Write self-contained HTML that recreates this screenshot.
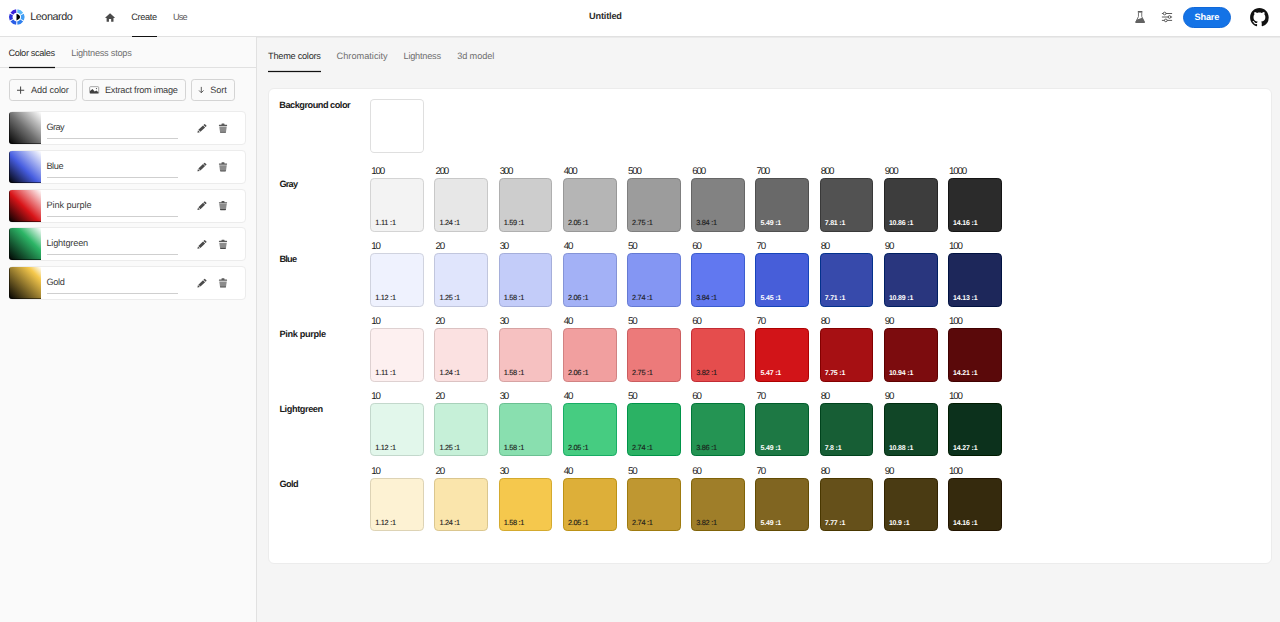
<!DOCTYPE html>
<html lang="en"><head><meta charset="utf-8"><title>Leonardo</title>
<style>
html,body{margin:0;padding:0}
body{width:1280px;height:622px;overflow:hidden;position:relative;background:#f5f5f5;font-family:"Liberation Sans", sans-serif;}
header,nav,aside,main,section,ul,li{display:block;margin:0;padding:0;list-style:none}
.t{position:absolute;white-space:pre;line-height:1;text-rendering:geometricPrecision}
.r{-webkit-text-stroke:0.120px currentColor}
.abs{position:absolute}
#hdr{position:absolute;left:0;top:0;width:1280px;height:36px;background:#fff;border-bottom:1px solid #e1e1e1}
#hdrshade{position:absolute;left:0;top:37px;width:1280px;height:1px;background:rgba(0,0,0,.045)}
#left{position:absolute;left:0;top:37px;width:256px;height:585px;background:#fafafa;border-right:1px solid #e1e1e1}
#ltabline{position:absolute;left:0;top:67px;width:256px;height:1px;background:#e1e1e1}
.sel{position:absolute;height:1px;background:#111}
.sel.soft{background:rgba(17,17,17,.12)}
.sel.mid{background:rgba(17,17,17,.4)}
.btn{position:absolute;top:79px;height:20px;border:1px solid #d4d4d4;border-radius:3.200px;box-sizing:content-box}
.card{position:absolute;left:9px;width:235px;height:32px;background:#fff;border:1px solid #ececec;border-radius:4px;box-sizing:content-box}
.grad{position:absolute;left:-1px;top:0;width:32px;height:32px;border-radius:3px 0 0 3px;box-shadow:inset 1px -1px 0 rgba(0,0,0,.5)}
.ul{position:absolute;left:37px;top:26px;width:131px;height:1px;background:#cfcfcf}
#share{position:absolute;left:1183px;top:7px;width:48px;height:20.500px;border-radius:10.500px;background:#1473e6;box-sizing:border-box;border:1px solid #1068d8}
#panel{position:absolute;left:268px;top:88px;width:1002px;height:474px;background:#fff;border:1px solid #ececec;border-radius:6px}
.sw{position:absolute;width:53.900px;height:53.900px;border-radius:4.200px;box-sizing:border-box;border:1px solid rgba(0,0,0,.18)}
</style></head><body>
<header>
<div id="hdr"></div>
<div id="hdrshade"></div>
<svg class="abs" style="left:7px;top:7px" width="20" height="20" viewBox="0 0 20 20"><g transform="translate(1.50 1.80) scale(0.9432 0.9432)"><g transform="translate(8.8 8.8)"><g fill="none" stroke-width="3.7"><path stroke="#5ab8f8" d="M0.55 -6.38A6.4 6.4 0 0 1 5.25 -3.67"/><path stroke="#419df3" d="M5.80 -2.71A6.4 6.4 0 0 1 5.80 2.71"/><path stroke="#2f80ee" d="M5.25 3.67A6.4 6.4 0 0 1 0.55 6.38"/><path stroke="#2a5de6" d="M-0.55 6.38A6.4 6.4 0 0 1 -5.25 3.67"/><path stroke="#2a33dc" d="M-5.80 2.71A6.4 6.4 0 0 1 -5.80 -2.71"/><path stroke="#3a1fd8" d="M-5.25 -3.67A6.4 6.4 0 0 1 -0.55 -6.38"/></g><path fill="#000" d="M-0.3 -3.5C2.4 -2.7 3.5 -1 3.5 0C3.5 1 2.4 2.7 -0.3 3.5Z"/></g></g></svg>
<span class="t" style="left:30.20px;top:12px;font-size:10.8px;font-weight:400;color:#2c2c2c;letter-spacing:-0.420px">Leonardo</span>
<nav>
<svg class="abs" style="left:104px;top:11px" width="14" height="12" viewBox="0 0 14 12"><g transform="translate(1.00 1.90) scale(0.4591 0.4500)"><path fill="#4b4b4b" d="M11 0.500 0.800 10.200a.5.5 0 0 0 .35.860H3.500V19a.6.6 0 0 0 .6.6H8.600V13.500h4.800V19.600H17.900a.6.6 0 0 0 .6-.6V11.060h2.350a.5.500 0 0 0 .35-.86z"/></g></svg>
<span class="t" style="left:131.30px;top:13px;font-size:9.2px;font-weight:400;color:#2c2c2c;letter-spacing:-0.356px">Create</span>
<div class="sel" style="left:131.600px;top:36px;width:25.600px"></div><div class="sel mid" style="left:131.600px;top:37px;width:25.600px"></div>
<span class="t" style="left:172.90px;top:13px;font-size:9.2px;font-weight:400;color:#5a5a5a;letter-spacing:-0.772px">Use</span>
</nav>
<span class="t" style="left:589.10px;top:12px;font-size:9.2px;font-weight:700;color:#2c2c2c;letter-spacing:-0.186px">Untitled</span>
<svg class="abs" style="left:1134px;top:10px" width="13" height="15" viewBox="0 0 13 15"><g transform="translate(1.10 1.10) scale(0.9091 0.9672)"><path fill="#4b4b4b" d="M3 0h5v1.500H3z"/><path fill="none" stroke="#5a5a5a" stroke-width="0.900" d="M3.700 1.400V5.600L0.800 11.200M7.300 1.400V5.600L10.200 11.200"/><path fill="#626262" d="M2.100 8.700 8 6.900 10.700 11.300a.6.6 0 0 1-.5.900H0.800a.6.6 0 0 1-.5-.9z"/></g></svg>
<svg class="abs" style="left:1160px;top:11px" width="14" height="13" viewBox="0 0 14 13"><g transform="translate(1.90 1.00) scale(1.0000 1.0000)"><g fill="#fff" stroke="#4b4b4b" stroke-width="0.900"><path d="M0 1.500H10.200M0 5H10.200M0 8.400H10.200"/><circle cx="2.700" cy="1.500" r="1.350"/><circle cx="7.600" cy="5" r="1.350"/><circle cx="3.900" cy="8.400" r="1.350"/></g></g></svg>
<div id="share"></div>
<span class="t" style="left:1194.60px;top:13px;font-size:9.2px;font-weight:700;color:#ffffff;letter-spacing:-0.212px">Share</span>
<svg class="abs" style="left:1249px;top:7px" width="22" height="22" viewBox="0 0 22 22"><g transform="translate(1.10 1.10) scale(1.1625 1.1629)"><path fill="#111" d="M8 0C3.580 0 0 3.580 0 8c0 3.540 2.290 6.530 5.470 7.590.4.070.55-.17.55-.38 0-.19-.01-.82-.01-1.490-2.010.37-2.530-.49-2.690-.94-.09-.23-.48-.94-.82-1.130-.28-.15-.68-.52-.01-.53.63-.01 1.080.58 1.230.82.72 1.210 1.870.87 2.330.66.070-.52.28-.87.510-1.070-1.780-.2-3.640-.89-3.640-3.950 0-.87.310-1.590.82-2.150-.08-.2-.36-1.020.08-2.120 0 0 .67-.21 2.200.82.640-.18 1.320-.27 2-.27.680 0 1.360.09 2 .27 1.530-1.040 2.200-.82 2.200-.82.440 1.100.16 1.920.08 2.120.510.56.82 1.270.82 2.150 0 3.070-1.870 3.750-3.650 3.950.29.25.54.73.54 1.480 0 1.070-.01 1.930-.01 2.200 0 .21.150.46.55.38A8.013 8.013 0 0 0 16 8c0-4.420-3.580-8-8-8z"/></g></svg>
</header>
<aside>
<div id="left"></div>
<div id="ltabline"></div>
<nav>
<span class="t" style="left:8.40px;top:49px;font-size:9.2px;font-weight:400;color:#2c2c2c;letter-spacing:-0.351px">Color scales</span>
<div class="sel soft" style="left:8.600px;top:66px;width:46.800px"></div><div class="sel" style="left:8.600px;top:67px;width:46.800px"></div><div class="sel soft" style="left:8.600px;top:68px;width:46.800px"></div>
<span class="t" style="left:71.30px;top:49px;font-size:9.2px;font-weight:400;color:#6e6e6e;letter-spacing:-0.239px">Lightness stops</span>
</nav>
<div class="btn" style="left:9px;width:66px"></div>
<svg class="abs" style="left:16px;top:85px" width="11" height="11" viewBox="0 0 11 11"><g transform="translate(1.00 1.60) scale(0.7200 0.7200)"><path fill="#464646" d="M4.300 0h1.400v4.300H10v1.400H5.700V10H4.300V5.700H0V4.300h4.300z"/></g></svg>
<span class="t" style="left:31.10px;top:86px;font-size:9.2px;font-weight:400;color:#3a3a3a;letter-spacing:-0.129px">Add color</span>
<div class="btn" style="left:82px;width:102px"></div>
<svg class="abs" style="left:88px;top:85px" width="13" height="11" viewBox="0 0 13 11"><g transform="translate(1.30 1.30) scale(1.0000 1.0000)"><rect x="0.400" y="0.400" width="9" height="6.700" rx="0.800" fill="#fff" stroke="#8e8e8e" stroke-width="0.800"/><path fill="#404040" d="M0.700 7V4.800L3.200 2.700 5.400 5.300 7.100 4.300 9.100 5.900V7z"/><circle cx="7.200" cy="2.300" r="0.650" fill="#505050"/></g></svg>
<span class="t" style="left:104.90px;top:86px;font-size:9.2px;font-weight:400;color:#3a3a3a;letter-spacing:-0.241px">Extract from image</span>
<div class="btn" style="left:191px;width:42px"></div>
<svg class="abs" style="left:197px;top:85px" width="9" height="10" viewBox="0 0 9 10"><g transform="translate(1.60 1.90) scale(0.4500 0.4571)"><path fill="none" stroke="#464646" stroke-width="1.900" d="M6 0v12.500M1 7.800l5 5 5-5"/></g></svg>
<span class="t" style="left:210.30px;top:86px;font-size:9.2px;font-weight:400;color:#3a3a3a;letter-spacing:-0.153px">Sort</span>
<ul>
<li class="item">
<div class="card" style="top:111.20px"><div class="grad" style="background:linear-gradient(to top right,#000000 0%,#393939 25%,#727272 50%,#b8b8b8 75%,#ffffff 100%)"></div><div class="ul"></div></div>
<span class="t" style="left:46.40px;top:123px;font-size:9.2px;font-weight:400;color:#3a3a3a;letter-spacing:-0.607px">Gray</span>
<svg class="abs" style="left:195px;top:122px" width="14" height="13" viewBox="0 0 14 13"><g transform="translate(1.90 1.60) scale(0.5611 0.5333)"><path fill="#4b4b4b" d="M16.900 3.500 14.500 1.100a.9.9 0 0 0-1.300 0L11.700 2.600l3.700 3.700 1.500-1.500a.9.9 0 0 0 0-1.300zM10.900 3.400 2.600 11.700l3.700 3.700 8.300-8.300zM1.900 12.600 1 16.500a.4.4 0 0 0 .5.5l3.900-.9z"/></g></svg>
<svg class="abs" style="left:217px;top:122px" width="12" height="13" viewBox="0 0 12 13"><g transform="translate(1.70 1.10) scale(0.5375 0.5556)"><path fill="#5a5a5a" d="M6 0.800h4a.8.8 0 0 1 .8.800V3H15a.6.6 0 0 1 .6.600v1a.6.6 0 0 1-.6.600H1a.6.6 0 0 1-.6-.6v-1A.6.6 0 0 1 1 3h4.200V1.600a.8.8 0 0 1 .8-.8z"/><path fill="#8c8c8c" d="M1 6.300h14l-1.300 8.700H2.300z"/><path fill="#484848" d="M2.300 15h11.400l-.3 1.700a1 1 0 0 1-1 .8H3.600a1 1 0 0 1-1-.8z"/></g></svg>
</li>
<li class="item">
<div class="card" style="top:149.90px"><div class="grad" style="background:linear-gradient(to top right,#000000 0%,#232e70 23%,#465de0 46%,#a2aef0 73%,#ffffff 100%)"></div><div class="ul"></div></div>
<span class="t" style="left:46.40px;top:162px;font-size:9.2px;font-weight:400;color:#3a3a3a;letter-spacing:-0.397px">Blue</span>
<svg class="abs" style="left:195px;top:161px" width="14" height="13" viewBox="0 0 14 13"><g transform="translate(1.90 1.30) scale(0.5611 0.5333)"><path fill="#4b4b4b" d="M16.900 3.500 14.500 1.100a.9.9 0 0 0-1.300 0L11.700 2.600l3.700 3.700 1.500-1.500a.9.9 0 0 0 0-1.300zM10.900 3.400 2.600 11.700l3.700 3.700 8.300-8.300zM1.900 12.600 1 16.500a.4.4 0 0 0 .5.5l3.900-.9z"/></g></svg>
<svg class="abs" style="left:217px;top:160px" width="12" height="13" viewBox="0 0 12 13"><g transform="translate(1.70 1.80) scale(0.5375 0.5556)"><path fill="#5a5a5a" d="M6 0.800h4a.8.8 0 0 1 .8.800V3H15a.6.6 0 0 1 .6.600v1a.6.6 0 0 1-.6.600H1a.6.6 0 0 1-.6-.6v-1A.6.6 0 0 1 1 3h4.200V1.600a.8.8 0 0 1 .8-.8z"/><path fill="#8c8c8c" d="M1 6.300h14l-1.300 8.700H2.300z"/><path fill="#484848" d="M2.300 15h11.400l-.3 1.700a1 1 0 0 1-1 .8H3.600a1 1 0 0 1-1-.8z"/></g></svg>
</li>
<li class="item">
<div class="card" style="top:188.60px"><div class="grad" style="background:linear-gradient(to top right,#000000 0%,#6c0a0c 24%,#d81418 47%,#ec8a8c 74%,#ffffff 100%)"></div><div class="ul"></div></div>
<span class="t" style="left:46.40px;top:201px;font-size:9.2px;font-weight:400;color:#3a3a3a;letter-spacing:-0.077px">Pink purple</span>
<svg class="abs" style="left:195px;top:200px" width="14" height="13" viewBox="0 0 14 13"><g transform="translate(1.90 1.00) scale(0.5611 0.5333)"><path fill="#4b4b4b" d="M16.900 3.500 14.500 1.100a.9.9 0 0 0-1.300 0L11.700 2.600l3.700 3.700 1.500-1.500a.9.9 0 0 0 0-1.300zM10.900 3.400 2.600 11.700l3.700 3.700 8.300-8.300zM1.900 12.600 1 16.500a.4.4 0 0 0 .5.5l3.900-.9z"/></g></svg>
<svg class="abs" style="left:217px;top:199px" width="12" height="13" viewBox="0 0 12 13"><g transform="translate(1.70 1.50) scale(0.5375 0.5556)"><path fill="#5a5a5a" d="M6 0.800h4a.8.8 0 0 1 .8.800V3H15a.6.6 0 0 1 .6.600v1a.6.6 0 0 1-.6.600H1a.6.6 0 0 1-.6-.6v-1A.6.6 0 0 1 1 3h4.200V1.600a.8.8 0 0 1 .8-.8z"/><path fill="#8c8c8c" d="M1 6.300h14l-1.300 8.700H2.300z"/><path fill="#484848" d="M2.300 15h11.400l-.3 1.700a1 1 0 0 1-1 .8H3.600a1 1 0 0 1-1-.8z"/></g></svg>
</li>
<li class="item">
<div class="card" style="top:227.30px"><div class="grad" style="background:linear-gradient(to top right,#000000 0%,#165a33 32%,#2cb566 64%,#96dab2 82%,#ffffff 100%)"></div><div class="ul"></div></div>
<span class="t" style="left:46.40px;top:239px;font-size:9.2px;font-weight:400;color:#3a3a3a;letter-spacing:-0.180px">Lightgreen</span>
<svg class="abs" style="left:195px;top:238px" width="14" height="13" viewBox="0 0 14 13"><g transform="translate(1.90 1.70) scale(0.5611 0.5333)"><path fill="#4b4b4b" d="M16.900 3.500 14.500 1.100a.9.9 0 0 0-1.300 0L11.700 2.600l3.700 3.700 1.500-1.500a.9.9 0 0 0 0-1.300zM10.900 3.400 2.600 11.700l3.700 3.700 8.300-8.300zM1.900 12.600 1 16.500a.4.4 0 0 0 .5.5l3.900-.9z"/></g></svg>
<svg class="abs" style="left:217px;top:238px" width="12" height="13" viewBox="0 0 12 13"><g transform="translate(1.70 1.20) scale(0.5375 0.5556)"><path fill="#5a5a5a" d="M6 0.800h4a.8.8 0 0 1 .8.800V3H15a.6.6 0 0 1 .6.600v1a.6.6 0 0 1-.6.600H1a.6.6 0 0 1-.6-.6v-1A.6.6 0 0 1 1 3h4.200V1.600a.8.8 0 0 1 .8-.8z"/><path fill="#8c8c8c" d="M1 6.300h14l-1.300 8.700H2.300z"/><path fill="#484848" d="M2.300 15h11.400l-.3 1.700a1 1 0 0 1-1 .8H3.600a1 1 0 0 1-1-.8z"/></g></svg>
</li>
<li class="item">
<div class="card" style="top:266.00px"><div class="grad" style="background:linear-gradient(to top right,#000000 0%,#7a6426 40%,#f5c84c 80%,#fae4a6 90%,#ffffff 100%)"></div><div class="ul"></div></div>
<span class="t" style="left:46.40px;top:278px;font-size:9.2px;font-weight:400;color:#3a3a3a;letter-spacing:-0.341px">Gold</span>
<svg class="abs" style="left:195px;top:277px" width="14" height="13" viewBox="0 0 14 13"><g transform="translate(1.90 1.40) scale(0.5611 0.5333)"><path fill="#4b4b4b" d="M16.900 3.500 14.500 1.100a.9.9 0 0 0-1.300 0L11.700 2.600l3.700 3.700 1.500-1.500a.9.9 0 0 0 0-1.300zM10.900 3.400 2.600 11.700l3.700 3.700 8.300-8.300zM1.900 12.600 1 16.500a.4.4 0 0 0 .5.5l3.900-.9z"/></g></svg>
<svg class="abs" style="left:217px;top:276px" width="12" height="13" viewBox="0 0 12 13"><g transform="translate(1.70 1.90) scale(0.5375 0.5556)"><path fill="#5a5a5a" d="M6 0.800h4a.8.8 0 0 1 .8.800V3H15a.6.6 0 0 1 .6.600v1a.6.6 0 0 1-.6.600H1a.6.6 0 0 1-.6-.6v-1A.6.6 0 0 1 1 3h4.200V1.600a.8.8 0 0 1 .8-.8z"/><path fill="#8c8c8c" d="M1 6.300h14l-1.300 8.700H2.300z"/><path fill="#484848" d="M2.300 15h11.400l-.3 1.700a1 1 0 0 1-1 .8H3.600a1 1 0 0 1-1-.8z"/></g></svg>
</li>
</ul>
</aside>
<main>
<nav>
<span class="t" style="left:268.10px;top:52px;font-size:9.2px;font-weight:400;color:#2c2c2c;letter-spacing:-0.260px">Theme colors</span>
<div class="sel soft" style="left:268.400px;top:70px;width:52.800px"></div><div class="sel" style="left:268.400px;top:71px;width:52.800px"></div><div class="sel soft" style="left:268.400px;top:72px;width:52.800px"></div>
<span class="t" style="left:336.60px;top:52px;font-size:9.2px;font-weight:400;color:#6e6e6e;letter-spacing:0.003px">Chromaticity</span>
<span class="t" style="left:403.50px;top:52px;font-size:9.2px;font-weight:400;color:#6e6e6e;letter-spacing:-0.218px">Lightness</span>
<span class="t" style="left:457.20px;top:52px;font-size:9.2px;font-weight:400;color:#6e6e6e;letter-spacing:-0.114px">3d model</span>
</nav>
<div id="panel"></div>
<section class="row">
<span class="t" style="left:279.30px;top:101px;font-size:9.2px;font-weight:700;color:#1a1a1a;letter-spacing:-0.488px">Background color</span>
<div class="sw" style="left:370.100px;top:99.200px;background:#fff;border-color:rgba(0,0,0,.125)"></div>
</section>
<section class="row">
<span class="t" style="left:279.40px;top:180px;font-size:9.2px;font-weight:700;color:#1a1a1a;letter-spacing:-0.751px">Gray</span>
<span class="t" style="left:371.25px;top:167px;font-size:9.8px;font-weight:400;color:#222222;letter-spacing:-1.230px">100</span>
<div class="sw" style="left:370.10px;top:177.90px;background:#f3f3f3;border-color:#d4d4d4"></div>
<span class="t r" style="left:375.30px;top:219px;font-size:7.4px;font-weight:400;color:#1a1a1a;letter-spacing:-0.227px">1.11 :1</span>
<span class="t" style="left:435.45px;top:167px;font-size:9.8px;font-weight:400;color:#222222;letter-spacing:-1.230px">200</span>
<div class="sw" style="left:434.30px;top:177.90px;background:#e7e7e7;border-color:#c8c8c8"></div>
<span class="t r" style="left:439.50px;top:219px;font-size:7.4px;font-weight:400;color:#1a1a1a;letter-spacing:-0.318px">1.24 :1</span>
<span class="t" style="left:499.65px;top:167px;font-size:9.8px;font-weight:400;color:#222222;letter-spacing:-1.230px">300</span>
<div class="sw" style="left:498.50px;top:177.90px;background:#cdcdcd;border-color:#afafaf"></div>
<span class="t r" style="left:503.70px;top:219px;font-size:7.4px;font-weight:400;color:#1a1a1a;letter-spacing:-0.318px">1.59 :1</span>
<span class="t" style="left:563.85px;top:167px;font-size:9.8px;font-weight:400;color:#222222;letter-spacing:-1.230px">400</span>
<div class="sw" style="left:562.70px;top:177.90px;background:#b5b5b5;border-color:#989898"></div>
<span class="t r" style="left:567.90px;top:219px;font-size:7.4px;font-weight:400;color:#1a1a1a;letter-spacing:-0.318px">2.05 :1</span>
<span class="t" style="left:628.05px;top:167px;font-size:9.8px;font-weight:400;color:#222222;letter-spacing:-1.230px">500</span>
<div class="sw" style="left:626.90px;top:177.90px;background:#9c9c9c;border-color:#7f7f7f"></div>
<span class="t r" style="left:632.10px;top:219px;font-size:7.4px;font-weight:400;color:#1a1a1a;letter-spacing:-0.318px">2.75 :1</span>
<span class="t" style="left:692.25px;top:167px;font-size:9.8px;font-weight:400;color:#222222;letter-spacing:-1.230px">600</span>
<div class="sw" style="left:691.10px;top:177.90px;background:#828282;border-color:#666666"></div>
<span class="t r" style="left:696.30px;top:219px;font-size:7.4px;font-weight:400;color:#1a1a1a;letter-spacing:-0.318px">3.84 :1</span>
<span class="t" style="left:756.45px;top:167px;font-size:9.8px;font-weight:400;color:#222222;letter-spacing:-1.230px">700</span>
<div class="sw" style="left:755.30px;top:177.90px;background:#696969;border-color:#4f4f4f"></div>
<span class="t" style="left:760.50px;top:220px;font-size:7px;font-weight:700;color:#ffffff;letter-spacing:-0.183px">5.49 :1</span>
<span class="t" style="left:820.65px;top:167px;font-size:9.8px;font-weight:400;color:#222222;letter-spacing:-1.230px">800</span>
<div class="sw" style="left:819.50px;top:177.90px;background:#525252;border-color:#393939"></div>
<span class="t" style="left:824.70px;top:220px;font-size:7px;font-weight:700;color:#ffffff;letter-spacing:-0.183px">7.81 :1</span>
<span class="t" style="left:884.85px;top:167px;font-size:9.8px;font-weight:400;color:#222222;letter-spacing:-1.230px">900</span>
<div class="sw" style="left:883.70px;top:177.90px;background:#3d3d3d;border-color:#252525"></div>
<span class="t" style="left:888.90px;top:220px;font-size:7px;font-weight:700;color:#ffffff;letter-spacing:-0.170px">10.86 :1</span>
<span class="t" style="left:949.05px;top:167px;font-size:9.8px;font-weight:400;color:#222222;letter-spacing:-1.216px">1000</span>
<div class="sw" style="left:947.90px;top:177.90px;background:#2b2b2b;border-color:#141414"></div>
<span class="t" style="left:953.10px;top:220px;font-size:7px;font-weight:700;color:#ffffff;letter-spacing:-0.170px">14.16 :1</span>
</section>
<section class="row">
<span class="t" style="left:279.40px;top:255px;font-size:9.2px;font-weight:700;color:#1a1a1a;letter-spacing:-0.741px">Blue</span>
<span class="t" style="left:371.25px;top:242px;font-size:9.8px;font-weight:400;color:#222222;letter-spacing:-1.256px">10</span>
<div class="sw" style="left:370.10px;top:252.80px;background:#eff2fe;border-color:#d0d3df"></div>
<span class="t r" style="left:375.30px;top:294px;font-size:7.4px;font-weight:400;color:#1a1a1a;letter-spacing:-0.318px">1.12 :1</span>
<span class="t" style="left:435.45px;top:242px;font-size:9.8px;font-weight:400;color:#222222;letter-spacing:-1.256px">20</span>
<div class="sw" style="left:434.30px;top:252.80px;background:#e0e5fc;border-color:#c1c6dd"></div>
<span class="t r" style="left:439.50px;top:294px;font-size:7.4px;font-weight:400;color:#1a1a1a;letter-spacing:-0.318px">1.25 :1</span>
<span class="t" style="left:499.65px;top:242px;font-size:9.8px;font-weight:400;color:#222222;letter-spacing:-1.256px">30</span>
<div class="sw" style="left:498.50px;top:252.80px;background:#c3ccf9;border-color:#a5aeda"></div>
<span class="t r" style="left:503.70px;top:294px;font-size:7.4px;font-weight:400;color:#1a1a1a;letter-spacing:-0.318px">1.58 :1</span>
<span class="t" style="left:563.85px;top:242px;font-size:9.8px;font-weight:400;color:#222222;letter-spacing:-1.256px">40</span>
<div class="sw" style="left:562.70px;top:252.80px;background:#a3b1f6;border-color:#8594d7"></div>
<span class="t r" style="left:567.90px;top:294px;font-size:7.4px;font-weight:400;color:#1a1a1a;letter-spacing:-0.318px">2.06 :1</span>
<span class="t" style="left:628.05px;top:242px;font-size:9.8px;font-weight:400;color:#222222;letter-spacing:-1.256px">50</span>
<div class="sw" style="left:626.90px;top:252.80px;background:#8496f3;border-color:#657ad3"></div>
<span class="t r" style="left:632.10px;top:294px;font-size:7.4px;font-weight:400;color:#1a1a1a;letter-spacing:-0.318px">2.74 :1</span>
<span class="t" style="left:692.25px;top:242px;font-size:9.8px;font-weight:400;color:#222222;letter-spacing:-1.256px">60</span>
<div class="sw" style="left:691.10px;top:252.80px;background:#6178f0;border-color:#3c5dd0"></div>
<span class="t r" style="left:696.30px;top:294px;font-size:7.4px;font-weight:400;color:#1a1a1a;letter-spacing:-0.318px">3.84 :1</span>
<span class="t" style="left:756.45px;top:242px;font-size:9.8px;font-weight:400;color:#222222;letter-spacing:-1.256px">70</span>
<div class="sw" style="left:755.30px;top:252.80px;background:#475ed9;border-color:#1644ba"></div>
<span class="t" style="left:760.50px;top:295px;font-size:7px;font-weight:700;color:#ffffff;letter-spacing:-0.183px">5.45 :1</span>
<span class="t" style="left:820.65px;top:242px;font-size:9.8px;font-weight:400;color:#222222;letter-spacing:-1.256px">80</span>
<div class="sw" style="left:819.50px;top:252.80px;background:#374aab;border-color:#03328d"></div>
<span class="t" style="left:824.70px;top:295px;font-size:7px;font-weight:700;color:#ffffff;letter-spacing:-0.183px">7.71 :1</span>
<span class="t" style="left:884.85px;top:242px;font-size:9.8px;font-weight:400;color:#222222;letter-spacing:-1.256px">90</span>
<div class="sw" style="left:883.70px;top:252.80px;background:#29367e;border-color:#001f62"></div>
<span class="t" style="left:888.90px;top:295px;font-size:7px;font-weight:700;color:#ffffff;letter-spacing:-0.170px">10.89 :1</span>
<span class="t" style="left:949.05px;top:242px;font-size:9.8px;font-weight:400;color:#222222;letter-spacing:-1.230px">100</span>
<div class="sw" style="left:947.90px;top:252.80px;background:#1d275a;border-color:#001140"></div>
<span class="t" style="left:953.10px;top:295px;font-size:7px;font-weight:700;color:#ffffff;letter-spacing:-0.170px">14.13 :1</span>
</section>
<section class="row">
<span class="t" style="left:279.40px;top:330px;font-size:9.2px;font-weight:700;color:#1a1a1a;letter-spacing:-0.323px">Pink purple</span>
<span class="t" style="left:371.25px;top:317px;font-size:9.8px;font-weight:400;color:#222222;letter-spacing:-1.256px">10</span>
<div class="sw" style="left:370.10px;top:327.70px;background:#fdf0f0;border-color:#ded1d1"></div>
<span class="t r" style="left:375.30px;top:369px;font-size:7.4px;font-weight:400;color:#1a1a1a;letter-spacing:-0.227px">1.11 :1</span>
<span class="t" style="left:435.45px;top:317px;font-size:9.8px;font-weight:400;color:#222222;letter-spacing:-1.256px">20</span>
<div class="sw" style="left:434.30px;top:327.70px;background:#fbe1e1;border-color:#dbc2c2"></div>
<span class="t r" style="left:439.50px;top:369px;font-size:7.4px;font-weight:400;color:#1a1a1a;letter-spacing:-0.318px">1.24 :1</span>
<span class="t" style="left:499.65px;top:317px;font-size:9.8px;font-weight:400;color:#222222;letter-spacing:-1.256px">30</span>
<div class="sw" style="left:498.50px;top:327.70px;background:#f6c1c1;border-color:#d6a3a3"></div>
<span class="t r" style="left:503.70px;top:369px;font-size:7.4px;font-weight:400;color:#1a1a1a;letter-spacing:-0.318px">1.58 :1</span>
<span class="t" style="left:563.85px;top:317px;font-size:9.8px;font-weight:400;color:#222222;letter-spacing:-1.256px">40</span>
<div class="sw" style="left:562.70px;top:327.70px;background:#f19f9f;border-color:#d18282"></div>
<span class="t r" style="left:567.90px;top:369px;font-size:7.4px;font-weight:400;color:#1a1a1a;letter-spacing:-0.318px">2.06 :1</span>
<span class="t" style="left:628.05px;top:317px;font-size:9.8px;font-weight:400;color:#222222;letter-spacing:-1.256px">50</span>
<div class="sw" style="left:626.90px;top:327.70px;background:#ec7a7a;border-color:#cb5d5f"></div>
<span class="t r" style="left:632.10px;top:369px;font-size:7.4px;font-weight:400;color:#1a1a1a;letter-spacing:-0.318px">2.75 :1</span>
<span class="t" style="left:692.25px;top:317px;font-size:9.8px;font-weight:400;color:#222222;letter-spacing:-1.256px">60</span>
<div class="sw" style="left:691.10px;top:327.70px;background:#e54d4d;border-color:#c22b34"></div>
<span class="t r" style="left:696.30px;top:369px;font-size:7.4px;font-weight:400;color:#1a1a1a;letter-spacing:-0.318px">3.82 :1</span>
<span class="t" style="left:756.45px;top:317px;font-size:9.8px;font-weight:400;color:#222222;letter-spacing:-1.256px">70</span>
<div class="sw" style="left:755.30px;top:327.70px;background:#d21418;border-color:#ae0000"></div>
<span class="t" style="left:760.50px;top:370px;font-size:7px;font-weight:700;color:#ffffff;letter-spacing:-0.183px">5.47 :1</span>
<span class="t" style="left:820.65px;top:317px;font-size:9.8px;font-weight:400;color:#222222;letter-spacing:-1.256px">80</span>
<div class="sw" style="left:819.50px;top:327.70px;background:#a61013;border-color:#840000"></div>
<span class="t" style="left:824.70px;top:370px;font-size:7px;font-weight:700;color:#ffffff;letter-spacing:-0.183px">7.75 :1</span>
<span class="t" style="left:884.85px;top:317px;font-size:9.8px;font-weight:400;color:#222222;letter-spacing:-1.256px">90</span>
<div class="sw" style="left:883.70px;top:327.70px;background:#7c0c0e;border-color:#5d0000"></div>
<span class="t" style="left:888.90px;top:370px;font-size:7px;font-weight:700;color:#ffffff;letter-spacing:-0.170px">10.94 :1</span>
<span class="t" style="left:949.05px;top:317px;font-size:9.8px;font-weight:400;color:#222222;letter-spacing:-1.230px">100</span>
<div class="sw" style="left:947.90px;top:327.70px;background:#5a090a;border-color:#3f0000"></div>
<span class="t" style="left:953.10px;top:370px;font-size:7px;font-weight:700;color:#ffffff;letter-spacing:-0.170px">14.21 :1</span>
</section>
<section class="row">
<span class="t" style="left:279.40px;top:405px;font-size:9.2px;font-weight:700;color:#1a1a1a;letter-spacing:-0.408px">Lightgreen</span>
<span class="t" style="left:371.25px;top:392px;font-size:9.8px;font-weight:400;color:#222222;letter-spacing:-1.256px">10</span>
<div class="sw" style="left:370.10px;top:402.60px;background:#e2f7eb;border-color:#c3d8cc"></div>
<span class="t r" style="left:375.30px;top:444px;font-size:7.4px;font-weight:400;color:#1a1a1a;letter-spacing:-0.318px">1.12 :1</span>
<span class="t" style="left:435.45px;top:392px;font-size:9.8px;font-weight:400;color:#222222;letter-spacing:-1.256px">20</span>
<div class="sw" style="left:434.30px;top:402.60px;background:#c6f0d8;border-color:#a8d1ba"></div>
<span class="t r" style="left:439.50px;top:444px;font-size:7.4px;font-weight:400;color:#1a1a1a;letter-spacing:-0.318px">1.25 :1</span>
<span class="t" style="left:499.65px;top:392px;font-size:9.8px;font-weight:400;color:#222222;letter-spacing:-1.256px">30</span>
<div class="sw" style="left:498.50px;top:402.60px;background:#89dfaf;border-color:#6bc092"></div>
<span class="t r" style="left:503.70px;top:444px;font-size:7.4px;font-weight:400;color:#1a1a1a;letter-spacing:-0.318px">1.58 :1</span>
<span class="t" style="left:563.85px;top:392px;font-size:9.8px;font-weight:400;color:#222222;letter-spacing:-1.256px">40</span>
<div class="sw" style="left:562.70px;top:402.60px;background:#46cc81;border-color:#18ad65"></div>
<span class="t r" style="left:567.90px;top:444px;font-size:7.4px;font-weight:400;color:#1a1a1a;letter-spacing:-0.318px">2.05 :1</span>
<span class="t" style="left:628.05px;top:392px;font-size:9.8px;font-weight:400;color:#222222;letter-spacing:-1.256px">50</span>
<div class="sw" style="left:626.90px;top:402.60px;background:#2bb264;border-color:#009449"></div>
<span class="t r" style="left:632.10px;top:444px;font-size:7.4px;font-weight:400;color:#1a1a1a;letter-spacing:-0.318px">2.74 :1</span>
<span class="t" style="left:692.25px;top:392px;font-size:9.8px;font-weight:400;color:#222222;letter-spacing:-1.256px">60</span>
<div class="sw" style="left:691.10px;top:402.60px;background:#249453;border-color:#007739"></div>
<span class="t r" style="left:696.30px;top:444px;font-size:7.4px;font-weight:400;color:#1a1a1a;letter-spacing:-0.318px">3.86 :1</span>
<span class="t" style="left:756.45px;top:392px;font-size:9.8px;font-weight:400;color:#222222;letter-spacing:-1.256px">70</span>
<div class="sw" style="left:755.30px;top:402.60px;background:#1d7844;border-color:#005c2b"></div>
<span class="t" style="left:760.50px;top:445px;font-size:7px;font-weight:700;color:#ffffff;letter-spacing:-0.183px">5.49 :1</span>
<span class="t" style="left:820.65px;top:392px;font-size:9.8px;font-weight:400;color:#222222;letter-spacing:-1.256px">80</span>
<div class="sw" style="left:819.50px;top:402.60px;background:#175e35;border-color:#00431d"></div>
<span class="t" style="left:824.70px;top:445px;font-size:7px;font-weight:700;color:#ffffff;letter-spacing:-0.201px">7.8 :1</span>
<span class="t" style="left:884.85px;top:392px;font-size:9.8px;font-weight:400;color:#222222;letter-spacing:-1.256px">90</span>
<div class="sw" style="left:883.70px;top:402.60px;background:#114627;border-color:#002d10"></div>
<span class="t" style="left:888.90px;top:445px;font-size:7px;font-weight:700;color:#ffffff;letter-spacing:-0.170px">10.88 :1</span>
<span class="t" style="left:949.05px;top:392px;font-size:9.8px;font-weight:400;color:#222222;letter-spacing:-1.230px">100</span>
<div class="sw" style="left:947.90px;top:402.60px;background:#0c311c;border-color:#001b00"></div>
<span class="t" style="left:953.10px;top:445px;font-size:7px;font-weight:700;color:#ffffff;letter-spacing:-0.170px">14.27 :1</span>
</section>
<section class="row">
<span class="t" style="left:279.40px;top:480px;font-size:9.2px;font-weight:700;color:#1a1a1a;letter-spacing:-0.546px">Gold</span>
<span class="t" style="left:371.25px;top:467px;font-size:9.8px;font-weight:400;color:#222222;letter-spacing:-1.256px">10</span>
<div class="sw" style="left:370.10px;top:477.50px;background:#fdf2d3;border-color:#ddd3b5"></div>
<span class="t r" style="left:375.30px;top:519px;font-size:7.4px;font-weight:400;color:#1a1a1a;letter-spacing:-0.318px">1.12 :1</span>
<span class="t" style="left:435.45px;top:467px;font-size:9.8px;font-weight:400;color:#222222;letter-spacing:-1.256px">20</span>
<div class="sw" style="left:434.30px;top:477.50px;background:#fae5ac;border-color:#dac68f"></div>
<span class="t r" style="left:439.50px;top:519px;font-size:7.4px;font-weight:400;color:#1a1a1a;letter-spacing:-0.318px">1.24 :1</span>
<span class="t" style="left:499.65px;top:467px;font-size:9.8px;font-weight:400;color:#222222;letter-spacing:-1.256px">30</span>
<div class="sw" style="left:498.50px;top:477.50px;background:#f5c84d;border-color:#d4aa2e"></div>
<span class="t r" style="left:503.70px;top:519px;font-size:7.4px;font-weight:400;color:#1a1a1a;letter-spacing:-0.318px">1.58 :1</span>
<span class="t" style="left:563.85px;top:467px;font-size:9.8px;font-weight:400;color:#222222;letter-spacing:-1.256px">40</span>
<div class="sw" style="left:562.70px;top:477.50px;background:#ddaf39;border-color:#bc9216"></div>
<span class="t r" style="left:567.90px;top:519px;font-size:7.4px;font-weight:400;color:#1a1a1a;letter-spacing:-0.318px">2.05 :1</span>
<span class="t" style="left:628.05px;top:467px;font-size:9.8px;font-weight:400;color:#222222;letter-spacing:-1.256px">50</span>
<div class="sw" style="left:626.90px;top:477.50px;background:#bf9731;border-color:#9f7b0f"></div>
<span class="t r" style="left:632.10px;top:519px;font-size:7.4px;font-weight:400;color:#1a1a1a;letter-spacing:-0.318px">2.74 :1</span>
<span class="t" style="left:692.25px;top:467px;font-size:9.8px;font-weight:400;color:#222222;letter-spacing:-1.256px">60</span>
<div class="sw" style="left:691.10px;top:477.50px;background:#9f7e29;border-color:#806308"></div>
<span class="t r" style="left:696.30px;top:519px;font-size:7.4px;font-weight:400;color:#1a1a1a;letter-spacing:-0.318px">3.82 :1</span>
<span class="t" style="left:756.45px;top:467px;font-size:9.8px;font-weight:400;color:#222222;letter-spacing:-1.256px">70</span>
<div class="sw" style="left:755.30px;top:477.50px;background:#806521;border-color:#624b03"></div>
<span class="t" style="left:760.50px;top:520px;font-size:7px;font-weight:700;color:#ffffff;letter-spacing:-0.183px">5.49 :1</span>
<span class="t" style="left:820.65px;top:467px;font-size:9.8px;font-weight:400;color:#222222;letter-spacing:-1.256px">80</span>
<div class="sw" style="left:819.50px;top:477.50px;background:#65501a;border-color:#493700"></div>
<span class="t" style="left:824.70px;top:520px;font-size:7px;font-weight:700;color:#ffffff;letter-spacing:-0.183px">7.77 :1</span>
<span class="t" style="left:884.85px;top:467px;font-size:9.8px;font-weight:400;color:#222222;letter-spacing:-1.256px">90</span>
<div class="sw" style="left:883.70px;top:477.50px;background:#4a3b13;border-color:#312300"></div>
<span class="t" style="left:888.90px;top:520px;font-size:7px;font-weight:700;color:#ffffff;letter-spacing:-0.183px">10.9 :1</span>
<span class="t" style="left:949.05px;top:467px;font-size:9.8px;font-weight:400;color:#222222;letter-spacing:-1.230px">100</span>
<div class="sw" style="left:947.90px;top:477.50px;background:#352a0d;border-color:#211300"></div>
<span class="t" style="left:953.10px;top:520px;font-size:7px;font-weight:700;color:#ffffff;letter-spacing:-0.170px">14.16 :1</span>
</section>
</main>
</body></html>
